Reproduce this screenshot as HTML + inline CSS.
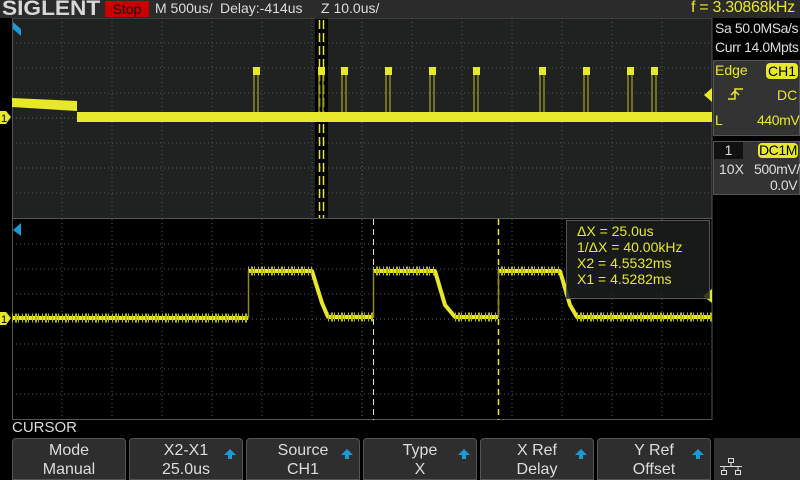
<!DOCTYPE html>
<html><head><meta charset="utf-8"><style>
*{margin:0;padding:0;box-sizing:border-box}
body{width:800px;height:480px;background:#000;overflow:hidden;position:relative;font-family:"Liberation Sans",sans-serif}
.a{position:absolute;white-space:nowrap}
.btn{position:absolute;top:438px;height:42px;background:#2e2e2e;border:1px solid #555;border-radius:4px 4px 0 0;color:#ddd;font-size:16px;text-align:center;line-height:19px;padding-top:2px}
.arr{position:absolute;right:6px;top:10px;width:0;height:0;border-left:6px solid transparent;border-right:6px solid transparent;border-bottom:6px solid #1a9ad6}
.arr:after{content:"";position:absolute;left:-2px;top:6px;width:4px;height:4px;background:#1a9ad6}
.y{color:#e8e82a}
.r{letter-spacing:-0.4px}
</style></head><body>
<div class="a" style="left:0;top:0;width:800px;height:18px;background:#2b2b2b"></div>
<div class="a" style="left:2px;top:-3px;font-size:21px;font-weight:bold;color:#d8d8d8;transform:scaleX(1.08);transform-origin:left">SIGLENT</div>
<div class="a" style="left:105px;top:1px;width:44px;height:16px;background:#c80000;color:#111;font-size:14px;line-height:16px;text-align:center">Stop</div>
<div class="a" style="left:155px;top:0px;font-size:14px;color:#ddd">M 500us/</div>
<div class="a" style="left:220px;top:0px;font-size:14px;color:#ddd">Delay:-414us</div>
<div class="a" style="left:321px;top:0px;font-size:14px;color:#ddd">Z 10.0us/</div>
<div class="a y" style="left:691px;top:-1px;font-size:16px;letter-spacing:-0.3px">f = 3.30868kHz</div>

<svg class="a" style="left:0;top:18px" width="800" height="402" viewBox="0 18 800 402">
<rect x="12" y="18" width="700" height="200" fill="#1f2220"/>
<rect x="315" y="18" width="13" height="200" fill="#000"/>
<rect x="12" y="218" width="700" height="202" fill="#000"/>
<g stroke="#555" stroke-width="1" stroke-dasharray="1 3">
<path d="M62 18V218M112 18V218M162 18V218M212 18V218M262 18V218M312 18V218M412 18V218M462 18V218M512 18V218M562 18V218M612 18V218M662 18V218"/>
<path d="M12 43H712M12 68H712M12 93H712M12 143H712M12 168H712M12 193H712"/>
<path d="M62 219V420M112 219V420M162 219V420M212 219V420M262 219V420M312 219V420M412 219V420M462 219V420M512 219V420M562 219V420M612 219V420M662 219V420"/>
<path d="M12 244H712M12 269H712M12 294H712M12 344H712M12 369H712M12 394H712"/>
<path d="M362 18V218M362 219V420M12 118H712M12 319H712" stroke="#666"/>
</g>
<line x1="12" y1="218.5" x2="712" y2="218.5" stroke="#555"/>
<rect x="12.5" y="18" width="699.5" height="401.5" fill="none" stroke="#555"/>
<g stroke="#e8e82a" stroke-width="1.5" stroke-dasharray="9 4">
<path d="M319.5 20V218M323.5 20V218"/></g>
<polygon points="12,98 77,101 77,111 12,107" fill="#e8e82a"/>
<rect x="77" y="112" width="635" height="10" fill="#e8e82a"/>
<g stroke="#8a8a20" stroke-width="1.5">
<path d="M254 75V112M258 75V112M319 75V112M323 75V112M342 75V112M346 75V112M386 75V112M390 75V112M430 75V112M434 75V112M474 75V112M478 75V112M540 75V112M544 75V112M584 75V112M588 75V112M628 75V112M632 75V112M652 75V112M656 75V112"/></g>
<g fill="#e8e82a">
<rect x="253" y="67" width="7" height="8"/><rect x="318" y="67" width="7" height="8"/><rect x="341" y="67" width="7" height="8"/>
<rect x="385" y="67" width="7" height="8"/><rect x="429" y="67" width="7" height="8"/><rect x="473" y="67" width="7" height="8"/>
<rect x="539" y="67" width="7" height="8"/><rect x="583" y="67" width="7" height="8"/><rect x="627" y="67" width="7" height="8"/><rect x="651" y="67" width="7" height="8"/>
</g>
<line x1="373.5" y1="219" x2="373.5" y2="420" stroke="#ddd" stroke-dasharray="6 4"/>
<line x1="498.5" y1="219" x2="498.5" y2="420" stroke="#e8e82a" stroke-width="1.5" stroke-dasharray="6 4"/>
<path d="M12 318H248M248 271H312L322 303L328 317H373M373 271H435L445 305L455 317H498M498 271H560L570 305L577 317H712" fill="none" stroke="#e8e82a" stroke-width="4" stroke-linejoin="bevel"/>
<path d="M12 318H248M248 271H312M328 317H373M373 271H435M455 317H498M498 271H560M577 317H712" fill="none" stroke="#b8b810" stroke-width="9" stroke-dasharray="1 2 2 1 1 3"/>
<path d="M248.5 271V318M373.5 271V318M498.5 271V318" stroke="#8a8a20" stroke-width="1.5"/>
<polygon points="13,22 21,29 21,36 13,29" fill="#1a9ad6"/>
<polygon points="13,230 21,223 21,236" fill="#1a9ad6"/>
<polygon points="712,88 704,95 712,102" fill="#e8e82a"/>
<polygon points="712,289 703,296 712,303" fill="#e8e82a"/>
<polygon points="0,111 6,111 11,117 6,124 0,124" fill="#e8e82a"/>
<polygon points="0,312 6,312 11,318 6,325 0,325" fill="#e8e82a"/>
<text x="1" y="122" font-size="11" font-family="Liberation Sans" fill="#000">1</text>
<text x="1" y="323" font-size="11" font-family="Liberation Sans" fill="#000">1</text>
<rect x="566.5" y="220.5" width="143" height="78" fill="#1c1f1d" fill-opacity="0.85" stroke="#555"/>
</svg>
<div class="a y" style="left:577px;top:223px;font-size:14px;line-height:16px">ΔX = 25.0us<br>1/ΔX = 40.00kHz<br>X2 = 4.5532ms<br>X1 = 4.5282ms</div>

<div class="a r" style="left:714px;top:19px;width:86px;height:41px;background:#000;color:#ddd;font-size:14px;line-height:19px;padding-left:1px">Sa 50.0MSa/s<br>Curr 14.0Mpts</div>
<div class="a" style="left:713px;top:60px;width:87px;height:76px;background:#333;border:1px solid #555"></div>
<div class="a y" style="left:715px;top:62px;font-size:14px">Edge</div>
<div class="a" style="left:766px;top:63px;width:32px;height:16px;background:#e8e82a;border-radius:4px;color:#000;font-size:14px;text-align:center;line-height:16px">CH1</div>
<svg class="a" style="left:726px;top:86px" width="20" height="16"><path d="M2 13H9V3H17" fill="none" stroke="#e8e82a" stroke-width="1.5"/><path d="M5 9L9 5L13 9" fill="none" stroke="#e8e82a" stroke-width="1.5"/></svg>
<div class="a y" style="left:777px;top:87px;font-size:14px">DC</div>
<div class="a y" style="left:715px;top:112px;font-size:14px">L</div>
<div class="a y r" style="left:757px;top:112px;font-size:14px">440mV</div>
<div class="a" style="left:713px;top:141px;width:87px;height:54px;background:#333;border:1px solid #555"></div>
<div class="a" style="left:714px;top:142px;width:29px;height:17px;background:#111;color:#ddd;font-size:14px;text-align:center;line-height:17px">1</div>
<div class="a r" style="left:758px;top:143px;width:40px;height:15px;background:#e8e82a;border-radius:4px;color:#000;font-size:14px;text-align:center;line-height:15px">DC1M</div>
<div class="a" style="left:719px;top:161px;font-size:14px;color:#ddd">10X</div>
<div class="a r" style="left:754px;top:161px;font-size:14px;color:#ddd">500mV/</div>
<div class="a r" style="left:770px;top:177px;font-size:14px;color:#ddd">0.0V</div>

<div class="a" style="left:12px;top:419px;font-size:15px;color:#ddd">CURSOR</div>
<div class="btn" style="left:12px;width:114px">Mode<br>Manual</div>
<div class="btn" style="left:129px;width:114px">X2-X1<br>25.0us<span class="arr"></span></div>
<div class="btn" style="left:246px;width:114px">Source<br>CH1<span class="arr"></span></div>
<div class="btn" style="left:363px;width:114px">Type<br>X<span class="arr"></span></div>
<div class="btn" style="left:480px;width:114px">X Ref<br>Delay<span class="arr"></span></div>
<div class="btn" style="left:597px;width:114px">Y Ref<br>Offset<span class="arr"></span></div>
<div class="a" style="left:714px;top:438px;width:86px;height:42px;background:#2e2e2e"></div>
<svg class="a" style="left:720px;top:458px" width="22" height="18"><g fill="none" stroke="#ddd" stroke-width="1"><rect x="8.5" y="0.5" width="5" height="4"/><rect x="1.5" y="12.5" width="5" height="4"/><rect x="15.5" y="12.5" width="5" height="4"/><path d="M11 5V8.5M4 12V8.5H18V12M0 8.5H22"/></g></svg>
</body></html>
